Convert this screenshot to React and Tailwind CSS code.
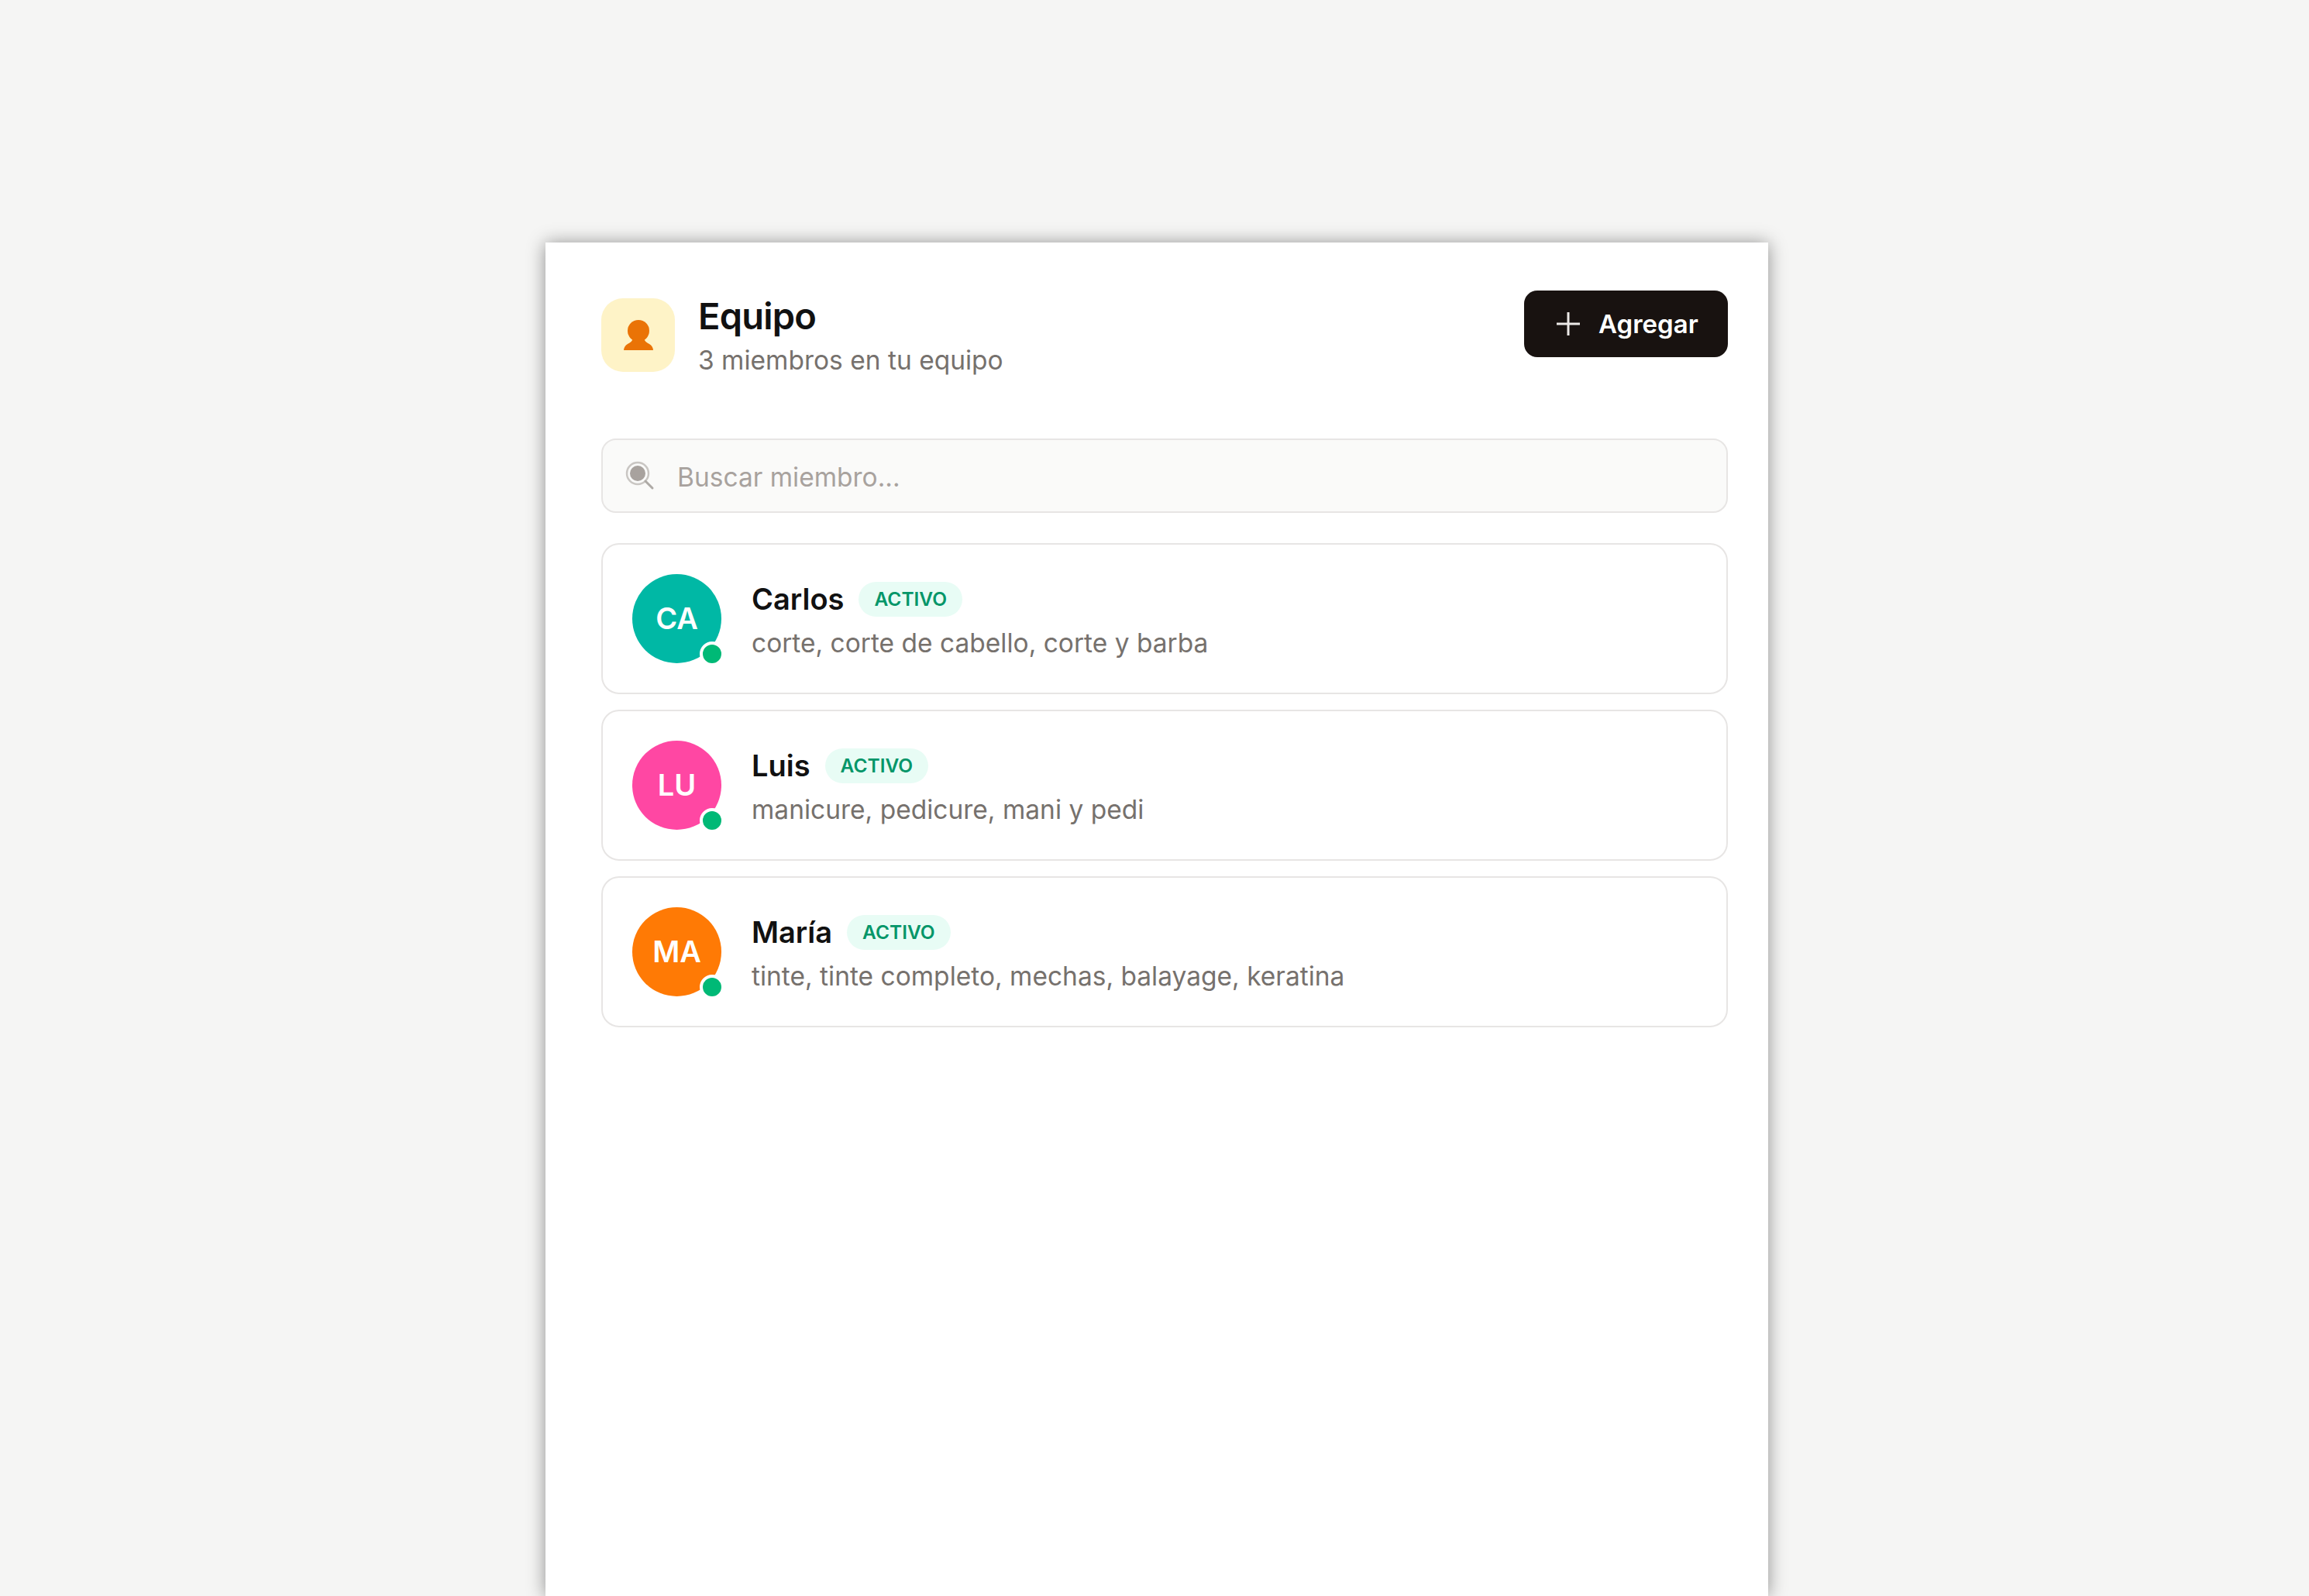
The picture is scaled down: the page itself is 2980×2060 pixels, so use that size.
const members = [
  { name: "Carlos", initials: "CA", color: "bg-[#00b8a5]", desc: "corte, corte de cabello, corte y barba" },
  { name: "Luis", initials: "LU", color: "bg-[#ff47a3]", desc: "manicure, pedicure, mani y pedi" },
  { name: "María", initials: "MA", color: "bg-[#ff7a05]", desc: "tinte, tinte completo, mechas, balayage, keratina" },
];

function PersonIcon() {
  return (
    <svg width="40" height="40" viewBox="0 0 40 40" fill="#ea7306">
      <circle cx="20" cy="14" r="14" />
      <path d="M13 24h14c1 3 3 5 7 7 3 1.500 5 5 5 8H1c0-3 2-6.500 5-8 4-2 6-4 7-7z" />
    </svg>
  );
}

function SearchIcon() {
  return (
    <svg width="40" height="40" viewBox="0 0 40 40" fill="none">
      <circle cx="17" cy="17" r="14" stroke="#c9c6c3" strokeWidth="2.5" />
      <circle cx="17" cy="17" r="10" fill="#a8a29e" />
      <path d="M27 27l9 9" stroke="#aeaaa6" strokeWidth="3" strokeLinecap="round" />
    </svg>
  );
}

function PlusIcon() {
  return (
    <svg width="30" height="30" viewBox="0 0 30 30" fill="none" stroke="#ece9e7" strokeWidth="3">
      <path d="M15 0v30M0 15h30" />
    </svg>
  );
}

export default function App() {
  return (
    <div className="h-[2060px] overflow-hidden bg-[#f5f5f4] pt-[313px] font-['Inter',sans-serif]">
      <div className="ml-[704px] h-[1747px] w-[1578px] bg-white pl-[72px] pr-[52px] pt-[62px] shadow-[0_1px_22px_rgba(0,0,0,0.42)]">
        <div className="flex items-start justify-between">
          <div className="mt-[10px] flex items-start gap-[30px]">
            <div className="flex h-[95px] w-[95px] items-center justify-center rounded-[28px] bg-[#fef3c7]">
              <PersonIcon />
            </div>
            <div className="-mt-[7px]">
              <div className="text-[47px] leading-[60px] font-semibold tracking-[-0.8px] text-[#111111]">Equipo</div>
              <div className="text-[33.5px] leading-[54px] text-[#76716d]">3 miembros en tu equipo</div>
            </div>
          </div>
          <button className="flex h-[86px] w-[263px] items-center gap-[24px] rounded-[17px] bg-[#181210] pl-[42px] text-[33px] font-semibold text-white">
            <PlusIcon />
            <span className="pt-[1px]">Agregar</span>
          </button>
        </div>

        <div className="mt-[74px] flex h-[96px] items-center gap-[28px] rounded-[19px] border-2 border-[#e7e5e4] bg-[#fafaf9] pl-[28px]">
          <SearchIcon />
          <span className="pt-[5px] text-[33.5px] text-[#a8a29e]">Buscar miembro...</span>
        </div>

        <div className="mt-[39px] flex flex-col gap-[20px]">
          {members.map((m) => (
            <div key={m.name} className="flex h-[195px] items-center gap-[39px] rounded-[23px] border-2 border-[#e7e5e4] bg-white pl-[38px]">
              <div className={`relative flex h-[115px] w-[115px] items-center justify-center rounded-full text-[38px] font-semibold text-white ${m.color}`}>
                {m.initials}
                <span className="absolute -right-[4px] -bottom-[4px] h-[32px] w-[32px] rounded-full border-4 border-white bg-[#00b976]" />
              </div>
              <div className="mt-[5px]">
                <div className="flex items-center gap-[19px]">
                  <span className="text-[38px] leading-[54px] font-semibold text-[#111111]">{m.name}</span>
                  <span className="flex h-[45px] items-center rounded-full bg-[#e8fcf5] px-[20px] text-[24.5px] font-semibold text-[#059669]">ACTIVO</span>
                </div>
                <div className="mt-[4px] text-[33.5px] leading-[52px] text-[#76716d]">{m.desc}</div>
              </div>
            </div>
          ))}
        </div>
      </div>
    </div>
  );
}
